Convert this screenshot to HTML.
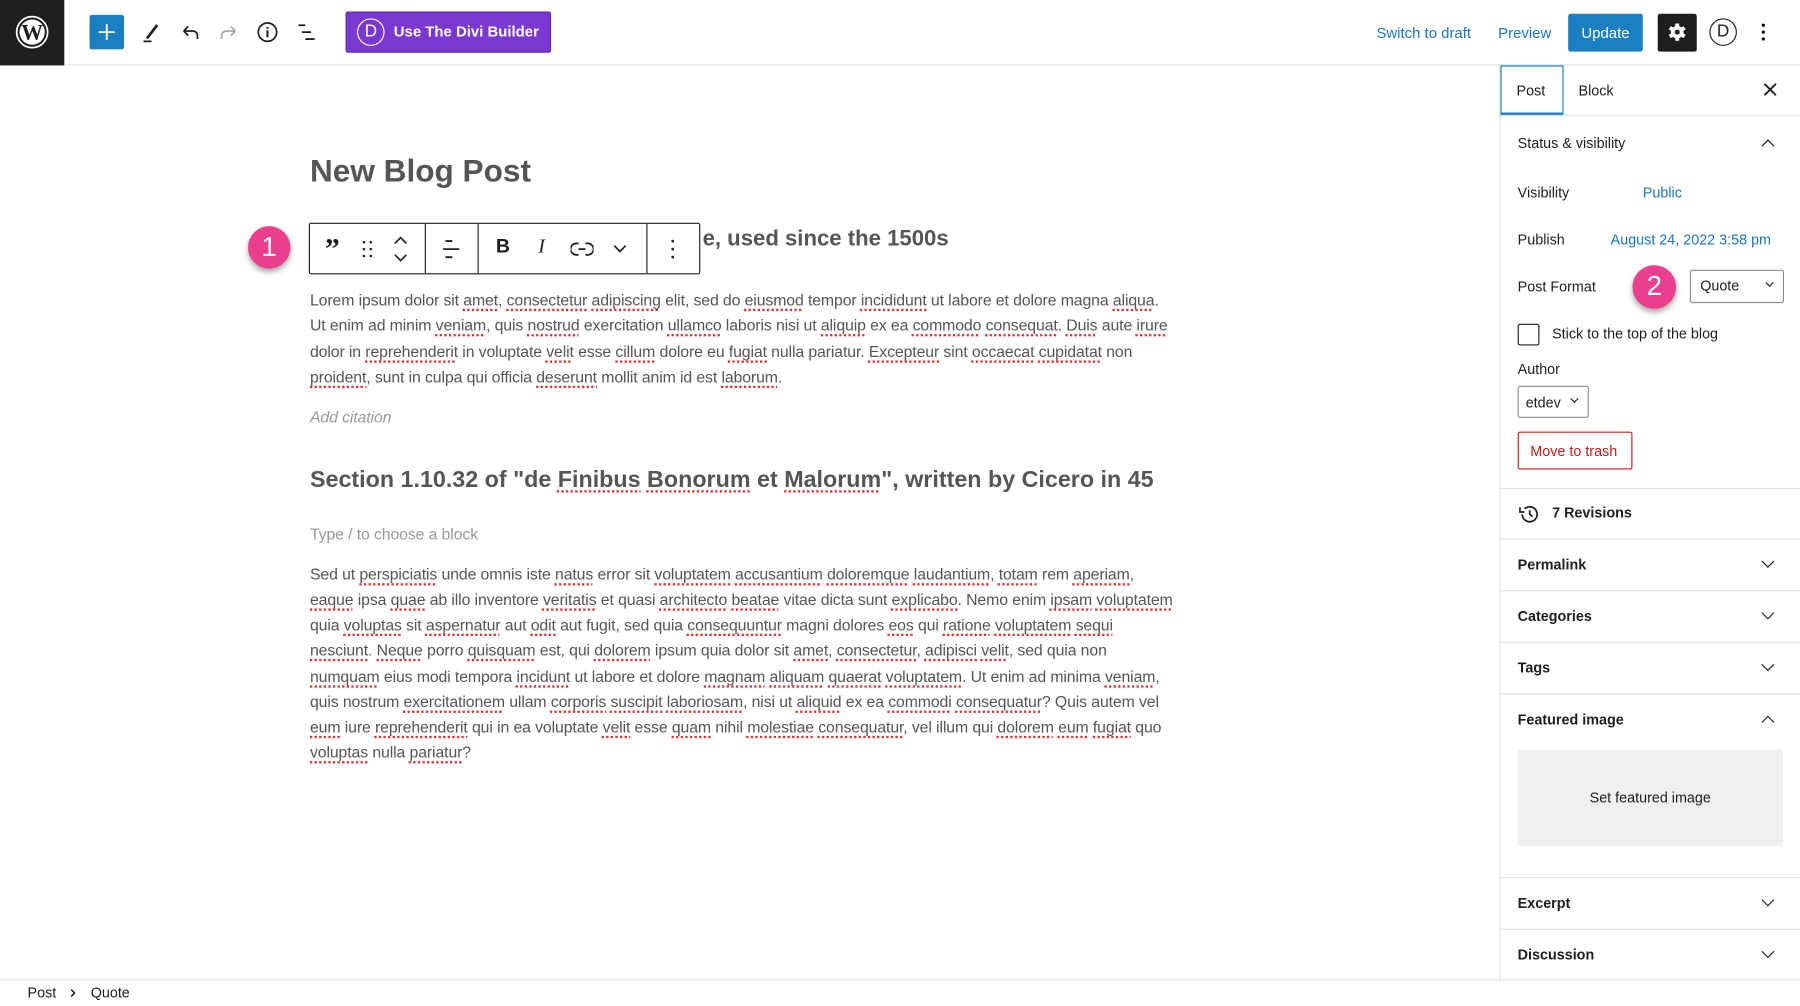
<!DOCTYPE html>
<html><head><meta charset="utf-8">
<style>
*{box-sizing:border-box;margin:0;padding:0}
html,body{width:1800px;height:1006px;overflow:hidden;background:#fff}
#w{position:absolute;left:0;top:0;width:1568px;height:876px;transform:scale(1.148);transform-origin:0 0;font-family:"Liberation Sans",sans-serif;color:#1e1e1e}
.a{position:absolute}
.hdr{left:0;top:0;width:1568px;height:57px;border-bottom:1px solid #e2e2e2}
.ed{font-family:"Liberation Sans Narrow","Liberation Sans",sans-serif;color:#555}
.p{left:270px;font-size:13.8px;letter-spacing:-0.1px;white-space:nowrap;line-height:22.3px}
u{text-decoration:underline dotted #e03030;text-decoration-thickness:1.5px;text-underline-offset:3px}
.side{left:1306px;top:57px;width:262px;height:796px;border-left:1px solid #e0e0e0}
.sec{position:absolute;left:0;width:262px;border-top:1px solid #e0e0e0}
.st{position:absolute;left:15px;font-size:12.5px;font-weight:bold;color:#1e1e1e}
.chev{position:absolute;left:229px;width:8px;height:8px;border-right:1.5px solid #1e1e1e;border-bottom:1.5px solid #1e1e1e;transform:rotate(45deg)}
.up{transform:rotate(-135deg)}
.lab{position:absolute;left:15px;font-size:12.5px;color:#1e1e1e}
.blue{color:#1a73c0}
.ic{position:absolute}
</style></head><body><div id="w">

<div class="a hdr"></div>
<div class="a" style="left:0;top:0;width:56px;height:57px;background:#1e1e1e"></div>
<svg class="ic" style="left:13px;top:13px" width="30" height="30" viewBox="0 0 30 30"><circle cx="15" cy="15" r="13.5" fill="none" stroke="#fff" stroke-width="1.5"/><circle cx="15" cy="15" r="11" fill="#fff"/><text x="15" y="21.5" font-family="Liberation Serif,serif" font-weight="bold" font-size="19" text-anchor="middle" fill="#1e1e1e">W</text></svg>
<div class="a" style="left:78px;top:13px;width:30px;height:30px;background:#1a7fc1;border-radius:2px"></div>
<svg class="ic" style="left:84px;top:19px" width="18" height="18"><path d="M9 2v14M2 9h14" stroke="#fff" stroke-width="1.6"/></svg>
<svg class="ic" style="left:122px;top:18px" width="20" height="20"><path d="M5 15L14 3l2 1.5L7 16z" fill="#1e1e1e"/><path d="M3 18h7" stroke="#1e1e1e" stroke-width="1.5"/></svg>
<svg class="ic" style="left:156px;top:18px" width="20" height="20"><path d="M4 9h8a4 4 0 0 1 4 4v3M4 9l4-4M4 9l4 4" fill="none" stroke="#1e1e1e" stroke-width="1.5"/></svg>
<svg class="ic" style="left:189px;top:18px" width="20" height="20"><path d="M16 9H8a4 4 0 0 0-4 4v3M16 9l-4-4M16 9l-4 4" fill="none" stroke="#aaa" stroke-width="1.5"/></svg>
<svg class="ic" style="left:223px;top:18px" width="20" height="20"><circle cx="10" cy="10" r="8" fill="none" stroke="#1e1e1e" stroke-width="1.5"/><path d="M10 8.5v6M10 5.5v1.5" stroke="#1e1e1e" stroke-width="1.8"/></svg>
<svg class="ic" style="left:257px;top:18px" width="20" height="20"><path d="M3 4h6M6 10h8M9 16h8" stroke="#1e1e1e" stroke-width="1.6"/></svg>
<div class="a" style="left:301px;top:10px;width:179px;height:36px;background:#7b38d0;border-radius:2px;border:1px solid #5e22b0"></div>
<div class="a" style="left:311px;top:16px;width:24px;height:24px;border:1.5px solid #fff;border-radius:50%;color:#fff;font-size:15px;text-align:center;line-height:21px">D</div>
<div class="a" style="left:343px;top:20px;color:#fff;font-size:13px;font-weight:bold">Use The Divi Builder</div>

<div class="a blue" style="left:1199px;top:21px;font-size:13px">Switch to draft</div>
<div class="a blue" style="left:1305px;top:21px;font-size:13px">Preview</div>
<div class="a" style="left:1366px;top:12px;width:65px;height:33px;background:#1a7fc1;border-radius:2px;color:#fff;font-size:13px;text-align:center;line-height:33px">Update</div>
<div class="a" style="left:1444px;top:12px;width:34px;height:33px;background:#1e1e1e;border-radius:2px"></div>
<svg class="ic" style="left:1451px;top:18px" width="20" height="20" viewBox="0 0 20 20"><g fill="#fff"><circle cx="10" cy="10" r="5.5"/><rect x="8.3" y="2.5" width="3.4" height="15"/><rect x="8.3" y="2.5" width="3.4" height="15" transform="rotate(60 10 10)"/><rect x="8.3" y="2.5" width="3.4" height="15" transform="rotate(120 10 10)"/></g><circle cx="10" cy="10" r="2.2" fill="#1e1e1e"/></svg>
<div class="a" style="left:1489px;top:16px;width:24px;height:24px;border:1.7px solid #1e1e1e;border-radius:50%;font-size:15px;text-align:center;line-height:21px">D</div>
<svg class="ic" style="left:1530px;top:18px" width="12" height="20"><circle cx="6" cy="4" r="1.4"/><circle cx="6" cy="10" r="1.4"/><circle cx="6" cy="16" r="1.4"/></svg>

<div class="a ed" style="left:270px;top:133px;font-size:27.5px;font-weight:bold;color:#555">New Blog Post</div>
<div class="a ed" style="left:612px;top:198px;font-size:19.3px;font-weight:bold;color:#555">e, used since the 1500s</div>

<div class="a" style="left:216px;top:197px;width:37px;height:37px;border-radius:50%;background:#ea3f8e;box-shadow:0 3px 5px rgba(0,0,0,.35);color:#fff;font-size:24px;text-align:center;line-height:37px">1</div>
<div class="a" style="left:269px;top:194px;width:341px;height:45px;border:1px solid #1e1e1e;border-radius:2px;background:#fff"></div>
<div class="a" style="left:370px;top:195px;width:1px;height:43px;background:#1e1e1e"></div>
<div class="a" style="left:416px;top:195px;width:1px;height:43px;background:#1e1e1e"></div>
<div class="a" style="left:563px;top:195px;width:1px;height:43px;background:#1e1e1e"></div>
<div class="a" style="left:283px;top:202px;font-size:26px;font-weight:bold;font-family:'Liberation Serif',serif">&#8221;</div>
<svg class="ic" style="left:313px;top:208px" width="14" height="18"><g fill="#1e1e1e"><circle cx="4" cy="3" r="1.1"/><circle cx="10" cy="3" r="1.1"/><circle cx="4" cy="9" r="1.1"/><circle cx="10" cy="9" r="1.1"/><circle cx="4" cy="15" r="1.1"/><circle cx="10" cy="15" r="1.1"/></g></svg>
<svg class="ic" style="left:341px;top:204px" width="16" height="26"><path d="M3 8l5-5 5 5M3 18l5 5 5-5" fill="none" stroke="#1e1e1e" stroke-width="1.4"/></svg>
<svg class="ic" style="left:384px;top:207px" width="18" height="20"><path d="M4 3h6M2 10h14M4 17h6" stroke="#1e1e1e" stroke-width="1.6"/></svg>
<div class="a" style="left:432px;top:205px;font-size:17px;font-weight:bold">B</div>
<div class="a" style="left:469px;top:205px;font-size:17px;font-style:italic;font-family:'Liberation Serif',serif">I</div>
<svg class="ic" style="left:497px;top:208px" width="20" height="18"><path d="M7 4H5a5 5 0 0 0 0 10h2M13 4h2a5 5 0 0 1 0 10h-2M7 9h6" fill="none" stroke="#1e1e1e" stroke-width="1.5"/></svg>
<svg class="ic" style="left:533px;top:211px" width="14" height="12"><path d="M2 3l5 5 5-5" fill="none" stroke="#1e1e1e" stroke-width="1.5"/></svg>
<svg class="ic" style="left:580px;top:207px" width="12" height="20"><g fill="#1e1e1e"><circle cx="6" cy="3" r="1.2"/><circle cx="6" cy="10" r="1.2"/><circle cx="6" cy="17" r="1.2"/></g></svg>

<div class="a ed p" style="top:251px">Lorem ipsum dolor sit <u>amet</u>, <u>consectetur</u> <u>adipiscing</u> elit, sed do <u>eiusmod</u> tempor <u>incididunt</u> ut labore et dolore magna <u>aliqua</u>.</div>
<div class="a ed p" style="top:273px">Ut enim ad minim <u>veniam</u>, quis <u>nostrud</u> exercitation <u>ullamco</u> laboris nisi ut <u>aliquip</u> ex ea <u>commodo</u> <u>consequat</u>. <u>Duis</u> aute <u>irure</u></div>
<div class="a ed p" style="top:296px">dolor in <u>reprehenderit</u> in voluptate <u>velit</u> esse <u>cillum</u> dolore eu <u>fugiat</u> nulla pariatur. <u>Excepteur</u> sint <u>occaecat</u> <u>cupidatat</u> non</div>
<div class="a ed p" style="top:318px"><u>proident</u>, sunt in culpa qui officia <u>deserunt</u> mollit anim id est <u>laborum</u>.</div>
<div class="a ed p" style="top:353px;font-style:italic;color:#999">Add citation</div>
<div class="a ed" style="left:270px;top:407px;font-size:20.3px;font-weight:bold;white-space:nowrap">Section 1.10.32 of "de <u>Finibus</u> <u>Bonorum</u> et <u>Malorum</u>", written by Cicero in 45</div>
<div class="a ed p" style="top:455px;color:#999">Type / to choose a block</div>
<div class="a ed p" style="top:490px">Sed ut <u>perspiciatis</u> unde omnis iste <u>natus</u> error sit <u>voluptatem</u> <u>accusantium</u> <u>doloremque</u> <u>laudantium</u>, <u>totam</u> rem <u>aperiam</u>,</div>
<div class="a ed p" style="top:512px"><u>eaque</u> ipsa <u>quae</u> ab illo inventore <u>veritatis</u> et quasi <u>architecto</u> <u>beatae</u> vitae dicta sunt <u>explicabo</u>. Nemo enim <u>ipsam</u> <u>voluptatem</u></div>
<div class="a ed p" style="top:534px">quia <u>voluptas</u> sit <u>aspernatur</u> aut <u>odit</u> aut fugit, sed quia <u>consequuntur</u> magni dolores <u>eos</u> qui <u>ratione</u> <u>voluptatem</u> <u>sequi</u></div>
<div class="a ed p" style="top:556px"><u>nesciunt</u>. <u>Neque</u> porro <u>quisquam</u> est, qui <u>dolorem</u> ipsum quia dolor sit <u>amet</u>, <u>consectetur</u>, <u>adipisci</u> <u>velit</u>, sed quia non</div>
<div class="a ed p" style="top:579px"><u>numquam</u> eius modi tempora <u>incidunt</u> ut labore et dolore <u>magnam</u> <u>aliquam</u> <u>quaerat</u> <u>voluptatem</u>. Ut enim ad minima <u>veniam</u>,</div>
<div class="a ed p" style="top:601px">quis nostrum <u>exercitationem</u> ullam <u>corporis</u> <u>suscipit</u> <u>laboriosam</u>, nisi ut <u>aliquid</u> ex ea <u>commodi</u> <u>consequatur</u>? Quis autem vel</div>
<div class="a ed p" style="top:623px"><u>eum</u> iure <u>reprehenderit</u> qui in ea voluptate <u>velit</u> esse <u>quam</u> nihil <u>molestiae</u> <u>consequatur</u>, vel illum qui <u>dolorem</u> <u>eum</u> <u>fugiat</u> quo</div>
<div class="a ed p" style="top:645px"><u>voluptas</u> nulla <u>pariatur</u>?</div>

<div class="a side">
 <div class="a" style="left:0;top:0;width:55px;height:44px;border:1.5px solid #1a7fc1;border-bottom:3px solid #1a7fc1"></div>
 <div class="lab" style="left:14px;top:15px">Post</div>
 <div class="lab" style="left:68px;top:15px">Block</div>
 <svg class="ic" style="left:229px;top:15px" width="12" height="12"><path d="M1 1l10 10M11 1L1 11" stroke="#1e1e1e" stroke-width="1.6"/></svg>
 <div class="sec" style="top:43px;height:325px">
  <div class="st" style="top:17px;font-weight:normal">Status &amp; visibility</div>
  <div class="chev up" style="top:22px"></div>
  <div class="lab" style="top:60px">Visibility</div>
  <div class="lab blue" style="left:124px;top:60px">Public</div>
  <div class="lab" style="top:101px">Publish</div>
  <div class="lab blue" style="left:96px;top:101px">August 24, 2022 3:58 pm</div>
  <div class="lab" style="top:142px">Post Format</div>
  <div class="a" style="left:115px;top:130px;width:38px;height:38px;border-radius:50%;background:#ea3f8e;box-shadow:0 3px 5px rgba(0,0,0,.35);color:#fff;font-size:24px;text-align:center;line-height:38px">2</div>
  <div class="a" style="left:165px;top:134px;width:82px;height:29px;border:1px solid #8c8f94;border-radius:2px"></div>
  <div class="lab" style="left:174px;top:141px">Quote</div>
  <div class="chev" style="left:232px;top:143px;width:5px;height:5px;border-width:1.2px"></div>
  <div class="a" style="left:15px;top:181px;width:19px;height:19px;border:1px solid #1e1e1e;border-radius:2px"></div>
  <div class="lab" style="left:45px;top:183px">Stick to the top of the blog</div>
  <div class="lab" style="top:214px">Author</div>
  <div class="a" style="left:15px;top:235px;width:62px;height:28px;border:1px solid #8c8f94;border-radius:2px"></div>
  <div class="lab" style="left:22px;top:243px">etdev</div>
  <div class="chev" style="left:62px;top:244px;width:5px;height:5px;border-width:1.2px"></div>
  <div class="a" style="left:15px;top:275px;width:100px;height:33px;border:1px solid #cc1818;border-radius:2px"></div>
  <div class="lab" style="left:26px;top:285px;color:#cc1818">Move to trash</div>
 </div>
 <div class="sec" style="top:368px;height:44px"><svg class="ic" style="left:15px;top:13px" width="20" height="18"><path d="M4 9a6.5 6.5 0 1 0 2-4.7" fill="none" stroke="#1e1e1e" stroke-width="1.5"/><path d="M2 3v4h4" fill="none" stroke="#1e1e1e" stroke-width="1.5"/><path d="M10.5 5.5V9l2.5 2" fill="none" stroke="#1e1e1e" stroke-width="1.5"/></svg><div class="st" style="left:45px;top:14px">7 Revisions</div></div>
 <div class="sec" style="top:412px;height:45px"><div class="st" style="top:15px">Permalink</div><div class="chev" style="top:15px"></div></div>
 <div class="sec" style="top:457px;height:45px"><div class="st" style="top:15px">Categories</div><div class="chev" style="top:15px"></div></div>
 <div class="sec" style="top:502px;height:45px"><div class="st" style="top:15px">Tags</div><div class="chev" style="top:15px"></div></div>
 <div class="sec" style="top:547px;height:160px"><div class="st" style="top:15px">Featured image</div><div class="chev up" style="top:20px"></div>
  <div class="a" style="left:15px;top:48px;width:231px;height:84px;background:#f0f0f0;border-radius:2px"></div>
  <div class="lab" style="left:15px;top:83px;width:231px;text-align:center">Set featured image</div></div>
 <div class="sec" style="top:707px;height:45px"><div class="st" style="top:15px">Excerpt</div><div class="chev" style="top:15px"></div></div>
 <div class="sec" style="top:752px;height:44px"><div class="st" style="top:15px">Discussion</div><div class="chev" style="top:15px"></div></div>
</div>

<div class="a" style="left:0;top:853px;width:1568px;height:23px;border-top:1px solid #e0e0e0;background:#fff"></div>
<div class="a" style="left:24px;top:858px;font-size:12.5px">Post</div>
<svg class="ic" style="left:60px;top:861px" width="8" height="8"><path d="M2 1l3 3-3 3" fill="none" stroke="#1e1e1e" stroke-width="1.3"/></svg>
<div class="a" style="left:79px;top:858px;font-size:12.5px">Quote</div>
</div></body></html>
